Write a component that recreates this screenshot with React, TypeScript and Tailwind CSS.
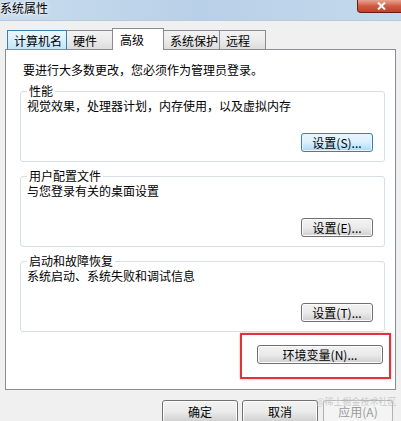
const tabs = [
  { label: "计算机名", w: "w-[60px]", state: "hover" },
  { label: "硬件", w: "w-[46px]", state: "normal" },
  { label: "高级", w: "w-[52px]", state: "active" },
  { label: "系统保护", w: "w-[57px]", state: "normal" },
  { label: "远程", w: "w-[46px]", state: "normal" },
];

function Tab({ label, w, state }: { label: string; w: string; state: string }) {
  if (state === "active") {
    return (
      <div
        className={`${w} relative z-10 -mx-px -mb-px h-[22px] border border-b-0 border-[#898c95] bg-white pl-[7px] pt-[2px] leading-[17px]`}
      >
        {label}
      </div>
    );
  }
  const bg =
    state === "hover"
      ? "bg-gradient-to-b from-[#eaf6fd] via-[#d9f0fc] to-[#bee6fd] border-[#3c7fb1]"
      : "bg-gradient-to-b from-[#f2f2f2] via-[#ebebeb] to-[#dcdcdc] border-[#898c95]";
  return (
    <div
      className={`${w} ${bg} h-[19px] border border-b-0 pl-[6px] pt-[1px] leading-[17px] [&+&]:border-l-0`}
    >
      {label}
    </div>
  );
}

function WinButton({
  children,
  className = "",
  variant = "normal",
}: {
  children: React.ReactNode;
  className?: string;
  variant?: "normal" | "hot" | "disabled";
}) {
  const look =
    variant === "hot"
      ? "border-[#3c7fb1] bg-gradient-to-b from-[#eaf6fd] via-[#d9f0fc] to-[#a7d9f5] shadow-[inset_0_0_0_1px_#e8f5fc]"
      : variant === "disabled"
        ? "border-[#adb2b5] bg-[#f4f4f4] text-[#9a9a9a]"
        : "border-[#707070] bg-gradient-to-b from-[#f2f2f2] via-[#ebebeb] to-[#cfcfcf] shadow-[inset_0_0_0_1px_#fcfcfc]";
  return (
    <button
      type="button"
      className={`${look} flex items-center justify-center rounded-[3px] border text-[12px] leading-none ${className}`}
    >
      {children}
    </button>
  );
}

function Group({
  title,
  desc,
  button,
  hot,
}: {
  title: string;
  desc: string;
  button: string;
  hot?: boolean;
}) {
  return (
    <fieldset className="ml-[14px] mr-[10px] rounded-[3px] border border-[#d5dfe5] pb-[9px]">
      <legend className="ml-[6px] px-[2px] leading-[12px]">{title}</legend>
      <div className="mt-[2px] pl-[6px] leading-[14px]">{desc}</div>
      <div className="mt-[20px] flex justify-end pr-[11px]">
        <WinButton className="h-[19px] w-[72px]" variant={hot ? "hot" : "normal"}>
          {button}
        </WinButton>
      </div>
    </fieldset>
  );
}

export default function App() {
  return (
    <div className="relative h-[421px] w-[401px] overflow-hidden bg-[#f0f0f0] font-['Noto_Sans_CJK_SC','Liberation_Sans',sans-serif] text-[12px] text-black">
      {/* Title bar */}
      <div className="flex h-[21px] items-start justify-between border-b border-[#b9c9da] bg-gradient-to-r from-[#c9dcee] via-[#b8d0e8] to-[#c4d9ec]">
        <div className="leading-[16px] [text-shadow:0_0_6px_#ffffff,0_0_3px_#ffffff]">
          系统属性
        </div>
        <div className="mr-[-4px] flex h-[13px] w-[48px] items-center justify-center rounded-bl-[4px] border border-t-0 border-[#6b1d12] bg-gradient-to-b from-[#e8a493] via-[#d05a43] to-[#c2412a]">
          <svg width="9" height="8" viewBox="0 0 9 8">
            <path d="M1 0.5 L8 7.5 M8 0.5 L1 7.5" stroke="#ffffff" strokeWidth="2" />
          </svg>
        </div>
      </div>

      {/* Tabs */}
      <div className="flex h-[28px] items-end pl-[7px]">
        {tabs.map((t) => (
          <Tab key={t.label} {...t} />
        ))}
      </div>

      {/* Panel */}
      <div className="mx-[5px] h-[341px] border border-[#898c95] bg-white pt-[12px]">
        <div className="pl-[17px] leading-[16px]">要进行大多数更改，您必须作为管理员登录。</div>
        <div className="mt-[7px] flex flex-col gap-[8px]">
          <Group
            title="性能"
            desc="视觉效果，处理器计划，内存使用，以及虚拟内存"
            button="设置(S)..."
            hot
          />
          <Group title="用户配置文件" desc="与您登录有关的桌面设置" button="设置(E)..." />
          <Group
            title="启动和故障恢复"
            desc="系统启动、系统失败和调试信息"
            button="设置(T)..."
          />
        </div>
        <div className="mt-[1px] flex justify-end pr-[4px]">
          <div className="border-2 border-[#e0343c] pb-[13px] pl-[15px] pr-[6px] pt-[10px] shadow-[0_0_2px_#f3a0a0]">
            <WinButton className="h-[19px] w-[126px]">环境变量(N)...</WinButton>
          </div>
        </div>
      </div>

      {/* Bottom buttons */}
      <div className="mt-[10px] flex pl-[162px]">
        <WinButton className="h-[23px] w-[76px]">确定</WinButton>
        <WinButton className="ml-[4px] h-[23px] w-[76px]">取消</WinButton>
        <WinButton className="ml-[5px] h-[23px] w-[70px]" variant="disabled">
          应用(A)
        </WinButton>
      </div>

      {/* Watermark */}
      <div className="pointer-events-none absolute left-[316px] top-[396px] text-[9px] leading-[12px] text-[#c4c4c4]/90">
        @稀土掘金技术社区
      </div>
    </div>
  );
}
